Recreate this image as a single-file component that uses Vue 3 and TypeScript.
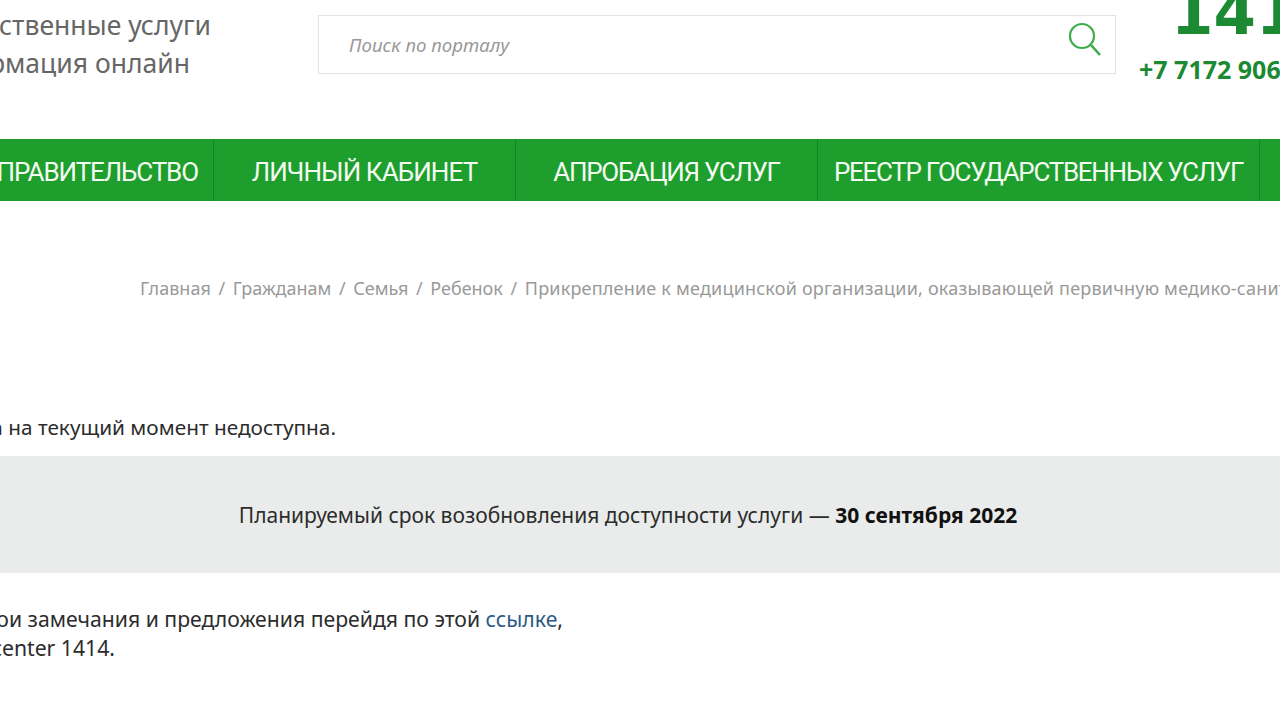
<template>
  <div class="page">
    <header class="header">
      <div class="slogan">
        <div class="clip-line">Государственные услуги</div>
        <div class="clip-line short">Информация онлайн</div>
      </div>
      <div class="search">
        <span class="search-hint">Поиск по порталу</span>
        <svg class="search-icon" width="36" height="36" viewBox="0 0 36 36" fill="none">
          <circle cx="15" cy="14" r="12" stroke="#3cab4a" stroke-width="2.2" />
          <path d="M24 23 L33 33" stroke="#3cab4a" stroke-width="2.6" />
        </svg>
      </div>
      <div class="phones">
        <div class="short-number">1414</div>
        <div class="long-number">+7 7172 906 906</div>
      </div>
    </header>

    <nav class="nav">
      <div
        v-for="item in navItems"
        :key="item.title"
        class="nav-item"
        :class="item.cls"
      >{{ item.title }}</div>
      <div class="nav-item rest"></div>
    </nav>

    <div class="crumbs">
      <template v-for="(crumb, i) in crumbs" :key="crumb">
        <span v-if="i > 0" class="crumb-sep">/</span>
        <span class="crumb">{{ crumb }}</span>
      </template>
    </div>

    <div class="clip-line notice">Услуга на текущий момент недоступна.</div>

    <div class="band">
      <span>Планируемый срок возобновления доступности услуги — <b>30 сентября 2022</b></span>
    </div>

    <div class="footer-text">
      <div class="clip-line first">Вы можете оставить свои замечания и предложения перейдя по этой&nbsp;<a class="link">ссылке</a>,</div>
      <div class="clip-line second">или позвонить в Call-center 1414.</div>
    </div>
  </div>
</template>

<script setup lang="ts">
const navItems = [
  { title: 'ПРАВИТЕЛЬСТВО', cls: 'gov' },
  { title: 'ЛИЧНЫЙ КАБИНЕТ', cls: 'cabinet' },
  { title: 'АПРОБАЦИЯ УСЛУГ', cls: 'approve' },
  { title: 'РЕЕСТР ГОСУДАРСТВЕННЫХ УСЛУГ', cls: 'registry' },
];

const crumbs = [
  'Главная',
  'Гражданам',
  'Семья',
  'Ребенок',
  'Прикрепление к медицинской организации, оказывающей первичную медико-санитарную помощь',
];
</script>

<style>
body {
  background: #fff;
}
</style>

<style scoped>
.page {
  width: 1280px;
  height: 720px;
  overflow: hidden;
  background: #fff;
  font-family: "Noto Sans", sans-serif;
  color: #2c2c2c;
}

.header {
  display: flex;
  height: 139px;
  align-items: flex-start;
}

.clip-line {
  display: flex;
  justify-content: flex-end;
  white-space: pre;
}

.slogan {
  width: 211px;
  flex: none;
  margin-top: 6px;
  margin-right: 107px;
  font-size: 26.5px;
  line-height: 38px;
  color: #666;
}

.slogan .short {
  width: 190px;
}

.search {
  width: 798px;
  height: 59px;
  margin-top: 15px;
  flex: none;
  box-sizing: border-box;
  border: 1px solid #e3e3e3;
  display: flex;
  align-items: center;
  justify-content: space-between;
  padding: 0 12px 0 30px;
}

.search-hint {
  font-size: 18.7px;
  font-style: italic;
  color: #999;
}

.search-icon {
  margin-top: -9px;
}

.phones {
  margin-left: 23px;
  white-space: nowrap;
  font-weight: 700;
  color: #1b8a33;
}

.short-number {
  font-family: "DejaVu Sans", sans-serif;
  font-size: 61px;
  line-height: 70px;
  margin-top: -22px;
  margin-left: 32px;
}

.long-number {
  font-size: 25px;
  line-height: 30px;
  margin-top: 6px;
}

.nav {
  display: flex;
  height: 62px;
  background: #1e9e2c;
  color: #f4fbf2;
  font-family: "Roboto", sans-serif;
  font-size: 26px;
}

.nav-item {
  display: flex;
  align-items: center;
  justify-content: center;
  flex: none;
  box-sizing: border-box;
  padding-top: 3px;
  border-right: 1px solid #17812a;
  white-space: nowrap;
  letter-spacing: -1.3px;
}

.gov { width: 214px; justify-content: flex-end; padding-right: 15px; letter-spacing: -1.1px; }
.cabinet { width: 302px; letter-spacing: -0.9px; }
.approve { width: 302px; }
.registry { width: 442px; }
.rest { flex: 1; border-right: 0; }

.crumbs {
  margin-top: 75px;
  margin-left: 140px;
  font-size: 18px;
  line-height: 24px;
  color: #999;
  white-space: nowrap;
}

.crumb:last-child {
  letter-spacing: 0.2px;
}

.crumb-sep {
  margin: 0 7.6px;
}

.notice {
  width: 336px;
  margin-top: 113px;
  font-size: 20.8px;
  line-height: 28px;
}

.band {
  margin-top: 15px;
  height: 117px;
  background: #e9ecea;
  display: flex;
  align-items: center;
  justify-content: center;
  padding-right: 24px;
  font-size: 21px;
}

.band b {
  color: #111;
}

.footer-text {
  margin-top: 31px;
  font-size: 21.2px;
  line-height: 29px;
}

.first { width: 563px; }
.second { width: 115px; }

.link {
  color: #2d5a86;
}
</style>
